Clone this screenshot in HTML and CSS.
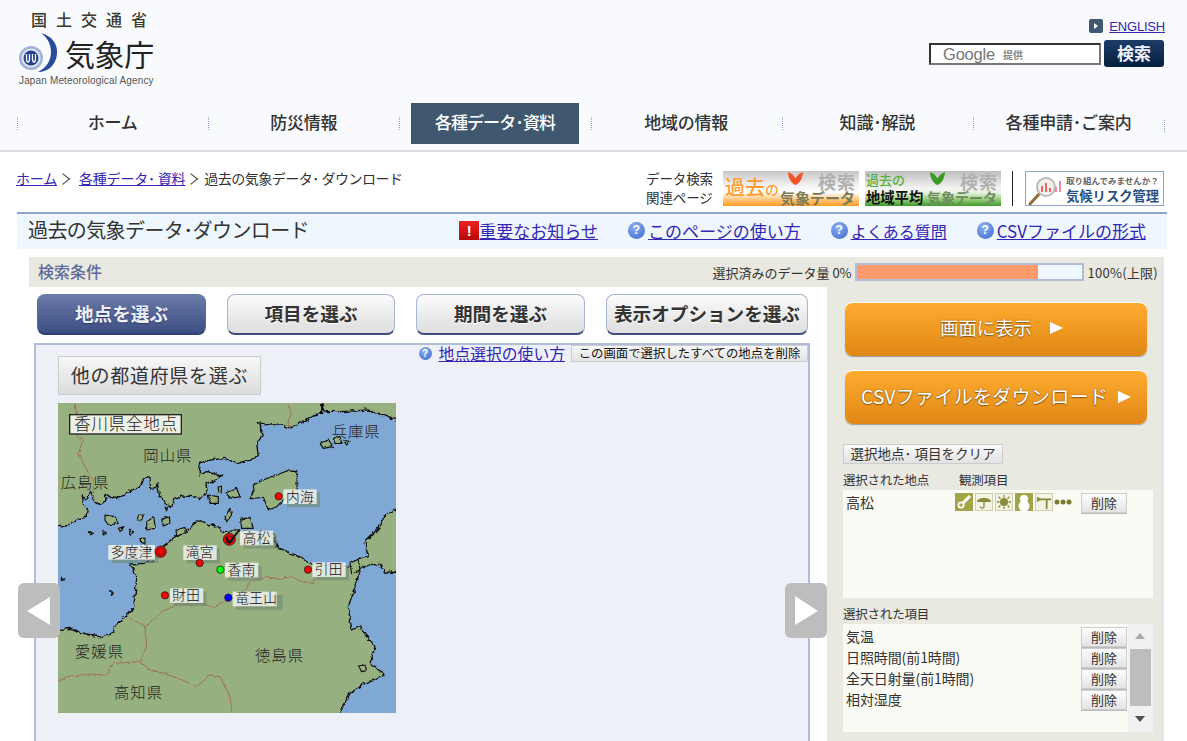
FILE: index.html
```html
<!DOCTYPE html>
<html lang="ja">
<head>
<meta charset="utf-8">
<title>過去の気象データ・ダウンロード</title>
<link rel="stylesheet" href="styles.css">
</head>
<body>
<header class="site-head">
  <div class="head-top">
    <div class="logo">
      <div class="ministry">国土交通省</div>
      <div class="logo-main">
        <svg class="logo-mark" viewBox="0 0 40 40" width="40" height="40" aria-hidden="true">
          <path d="M22 0C33 3 39 11 38 21C37 32 29 39 19 39C27 35 32 28 32 19C32 11 28 4 22 0Z" fill="#2c4a9c"/>
          <circle cx="12" cy="25" r="12" fill="#9fb2d8"/>
          <circle cx="12" cy="25" r="9.5" fill="#dfe6f3"/>
          <circle cx="12" cy="25" r="7.5" fill="#24408e"/>
          <path d="M7.5 21v5c0 4 3 4 3 0v-5M13.500 21v5c0 4 3 4 3 0v-5" fill="none" stroke="#fff" stroke-width="1.300"/>
        </svg>
        <span class="agency">気象庁</span>
      </div>
      <div class="agency-en">Japan Meteorological Agency</div>
    </div>
    <div class="head-tools">
      <div class="english"><span class="en-icon"></span><a href="#">ENGLISH</a></div>
      <div class="search">
        <div class="search-box"><span class="g">Google</span><span class="g-sub">提供</span></div>
        <div class="search-btn">検索</div>
      </div>
    </div>
  </div>
  <nav>
    <ul class="nav-list">
      <li class="nav-item"><a href="#">ホーム</a></li>
      <li class="nav-item"><a href="#">防災情報</a></li>
      <li class="nav-item active"><a href="#">各種データ･資料</a></li>
      <li class="nav-item"><a href="#">地域の情報</a></li>
      <li class="nav-item"><a href="#">知識･解説</a></li>
      <li class="nav-item"><a href="#">各種申請･ご案内</a></li>
    </ul>
  </nav>
</header>

<div class="sub-row">
  <div class="crumbs"><a href="#">ホーム</a><span class="chev"></span><a href="#">各種データ･ 資料</a><span class="chev"></span><span class="cur">過去の気象データ･ ダウンロード</span></div>
  <div class="related">
    <div class="related-label">データ検索<br>関連ページ</div>
    <div class="banner b-orange">
      <span class="b-past">過去<small>の</small></span>
      <span class="b-data">気象データ</span>
      <svg class="b-v" viewBox="0 0 16 14" width="17" height="13" aria-hidden="true"><path d="M0 0C3 1 6 3 8 7C10 3 13 1 16 0C16 6 13 12 8 14C3 12 0 6 0 0Z" fill="#f0562a"/></svg>
      <span class="b-search">検索</span>
    </div>
    <div class="banner b-green">
      <span class="b2-past">過去の</span>
      <span class="b2-area">地域平均</span>
      <span class="b2-data">気象データ</span>
      <svg class="b-v" viewBox="0 0 16 14" width="17" height="13" aria-hidden="true"><path d="M0 0C3 1 6 3 8 7C10 3 13 1 16 0C16 6 13 12 8 14C3 12 0 6 0 0Z" fill="#3e9a24"/></svg>
      <span class="b-search">検索</span>
    </div>
    <div class="divider"></div>
    <div class="banner b-risk">
      <svg class="risk-icon" viewBox="0 0 36 32" width="36" height="32" aria-hidden="true">
        <path d="M2 31L12 20" stroke="#9a6a3a" stroke-width="3" stroke-linecap="round"/>
        <circle cx="18" cy="14" r="9" fill="#f4f0ea" stroke="#bbb" stroke-width="2"/>
        <path d="M14 19v-6M18 19v-9M22 19v-4" stroke="#e66" stroke-width="2"/>
        <path d="M28 14v5M32 8v11" stroke="#e8a" stroke-width="2"/>
      </svg>
      <div class="risk-text"><span class="risk-small">取り組んでみませんか？</span><span class="risk-big">気候リスク管理</span></div>
    </div>
  </div>
</div>

<div class="title-bar">
  <h1 class="page-title">過去の気象データ･ダウンロード</h1>
  <div class="title-links">
    <div class="t-link"><span class="alert">!</span><a href="#" class="l17">重要なお知らせ</a></div>
    <div class="t-link"><span class="q">?</span><a href="#" class="l17 ml">このページの使い方</a></div>
    <div class="t-link"><span class="q">?</span><a href="#" class="l16 ml">よくある質問</a></div>
    <div class="t-link"><span class="q">?</span><a href="#" class="l17 ml">CSVファイルの形式</a></div>
  </div>
</div>

<main class="panel">
  <div class="panel-head">
    <div class="panel-title">検索条件</div>
    <div class="quota">
      <span>選択済みのデータ量 0%</span>
      <div class="bar"><div class="bar-fill"></div></div>
      <span class="limit">100%(上限)</span>
    </div>
  </div>
  <div class="panel-body">
    <section class="left">
      <div class="tabs">
        <div class="tab on w169">地点を選ぶ</div>
        <div class="tab w168">項目を選ぶ</div>
        <div class="tab w169">期間を選ぶ</div>
        <div class="tab w202">表示オプションを選ぶ</div>
      </div>
      <div class="map-panel">
        <div class="map-tools">
          <span class="q q-s">?</span><a href="#" class="howto">地点選択の使い方</a>
          <div class="del-all">この画面で選択したすべての地点を削除</div>
        </div>
        <div class="pref-btn">他の都道府県を選ぶ</div>
        <svg class="map" viewBox="24 9 1014 930" width="338" height="310" role="img" aria-label="香川県全地点の地図">
          <defs>
            <filter id="rough" filterUnits="userSpaceOnUse" x="-60" y="-60" width="1200" height="1100">
              <feTurbulence type="fractalNoise" baseFrequency="0.07" numOctaves="2" seed="4"/>
              <feDisplacementMap in="SourceGraphic" scale="16" xChannelSelector="R" yChannelSelector="G"/>
            </filter>
            <filter id="rough-s" filterUnits="userSpaceOnUse" x="-60" y="-60" width="1200" height="1100">
              <feTurbulence type="fractalNoise" baseFrequency="0.09" numOctaves="2" seed="9"/>
              <feDisplacementMap in="SourceGraphic" scale="9" xChannelSelector="R" yChannelSelector="G"/>
            </filter>
          </defs>
          <rect x="24" y="9" width="1014" height="930" fill="#96b080"/>
          <g fill="#80a8d4" stroke="#111" stroke-width="4" stroke-linejoin="round" filter="url(#rough)">
            <path d="M-30 372L50 378L62 372L80 358L108 352L112 325L100 312L97 285L108 300L122 275L130 300L150 315L168 300L165 280L182 292L205 296L225 282L245 270L268 262L280 240L292 230L300 232L302 268L316 262L322 248L328 285L345 310L365 322L372 295L395 288L430 290L450 296L472 280L468 250L495 240L515 228L470 215L452 222L445 190L480 180L525 175L560 190L595 182L625 170L620 130L640 105L625 68L660 75L695 75L720 85L755 68L790 45L815 40L815 12L822 35L875 35L955 30L1025 55L1090 80L1090 305L1005 345L985 385L945 425L955 470L925 478L895 500L860 495L800 495L775 490L755 472L725 462L680 440L672 402L640 395L600 395L560 392L520 395L490 372L470 375L452 362L430 370L405 398L375 410L348 432L330 445L312 482L280 490L240 492L260 530L255 590L250 625L225 650L195 680L190 695L160 712L120 705L85 695L60 685L-30 695Z"/>
            <path d="M1090 520L1005 516L985 490L955 495L930 505L915 560L895 620L905 690L930 680L975 740L960 790L1005 825L945 850L900 880L840 990L1090 990Z"/>
          </g>
          <g fill="#96b080" stroke="#111" stroke-width="3.500" stroke-linejoin="round" filter="url(#rough-s)">
            <path d="M610 255L640 240L680 225L712 212L740 215L742 280L715 285L700 300L680 320L655 330L640 292L600 296L612 272Z"/>
            <path d="M165 345L195 350L205 370L175 375L165 360Z"/>
            <path d="M265 345L280 345L275 360L262 360Z"/>
            <path d="M290 365L312 350L315 385L290 390Z"/>
            <path d="M335 358L358 350L360 370L340 378Z"/>
            <path d="M205 385L222 380L210 395Z"/>
            <path d="M115 395L130 400L120 405Z"/>
            <path d="M158 392L168 400L160 405Z"/>
            <path d="M238 388L250 395L240 408Z"/>
            <path d="M270 415L285 415L285 430L272 428Z"/>
            <path d="M378 390L405 382L405 400L380 408Z"/>
            <path d="M525 350L540 325L545 345L530 365Z"/>
            <path d="M525 280L560 265L570 290L545 295Z"/>
            <path d="M475 285L505 290L505 310L480 310Z"/>
            <path d="M505 262L515 258L513 280L505 280Z"/>
            <path d="M810 130L835 120L850 140L820 145Z"/>
            <path d="M850 115L870 110L875 130L855 130Z"/>
            <path d="M880 120L900 125L890 135Z"/>
            <path d="M572 358L600 352L610 385L575 385Z"/>
            <path d="M900 490L925 478L930 510L905 520Z"/>
            <path d="M182 572L190 578L184 584Z"/>
            <path d="M34 532L46 538L38 542Z"/>
            <path d="M345 322L352 322L350 332Z"/>
            <path d="M925 798L945 795L950 812L935 815Z"/>
          </g>
          <g fill="none" stroke="#a0705c" stroke-width="3" filter="url(#rough-s)">
            <path d="M75 9L85 75L82 110L100 120L85 160L110 210L130 240L130 300"/>
            <path d="M712 9L725 40L715 60L720 85"/>
            <path d="M795 530L790 550L760 545L720 530L690 538L650 530L620 540L600 545L590 570L560 590L530 600L510 610L490 625L460 610L430 612L380 610L370 620L335 635L320 650L285 680L240 655"/>
            <path d="M285 680L290 740L270 785L300 810L350 822L420 850L440 860L480 825L510 830L540 890L545 938"/>
            <path d="M270 785L190 790L170 825L125 822L90 825L50 830L24 845"/>
          </g>
          <g class="pref-names">
            <text x="845" y="112">兵庫県</text>
            <text x="280" y="183">岡山県</text>
            <text x="32" y="265">広島県</text>
            <text x="75" y="772">愛媛県</text>
            <text x="615" y="783">徳島県</text>
            <text x="192" y="895">高知県</text>
          </g>
          <rect x="59" y="44" width="335" height="58" fill="#eef0e4" stroke="#222" stroke-width="4"/>
          <text class="map-title" x="72" y="91">香川県全地点</text>
          <g class="shadow">
            <rect x="710" y="278" width="100" height="44"/>
            <rect x="580" y="402" width="100" height="44"/>
            <rect x="185" y="445" width="140" height="44"/>
            <rect x="410" y="446" width="100" height="44"/>
            <rect x="535" y="498" width="100" height="44"/>
            <rect x="797" y="497" width="100" height="44"/>
            <rect x="370" y="575" width="100" height="44"/>
            <rect x="558" y="585" width="140" height="44"/>
          </g>
          <g class="tags">
            <rect x="700" y="268" width="100" height="44"/>
            <rect x="570" y="392" width="100" height="44"/>
            <rect x="175" y="435" width="140" height="44"/>
            <rect x="400" y="436" width="100" height="44"/>
            <rect x="525" y="488" width="100" height="44"/>
            <rect x="787" y="487" width="100" height="44"/>
            <rect x="360" y="565" width="100" height="44"/>
            <rect x="548" y="575" width="132" height="44"/>
          </g>
          <g class="tag-text">
            <text x="708" y="305">内海</text>
            <text x="578" y="429">高松</text>
            <text x="182" y="472">多度津</text>
            <text x="407" y="472">滝宮</text>
            <text x="533" y="524">香南</text>
            <text x="794" y="523">引田</text>
            <text x="367" y="601">財田</text>
            <text x="556" y="609">竜王山</text>
          </g>
          <g stroke="#222" stroke-width="2.500">
            <circle cx="686" cy="289" r="11" fill="#f00"/>
            <circle cx="449" cy="489" r="11" fill="#f00"/>
            <circle cx="511" cy="509" r="11" fill="#0f0"/>
            <circle cx="774" cy="509" r="11" fill="#f00"/>
            <circle cx="345" cy="586" r="11" fill="#f00"/>
            <circle cx="535" cy="593" r="11" fill="#00f"/>
            <circle cx="332" cy="455" r="17" fill="#f00"/>
            <circle cx="332" cy="455" r="10" fill="#f00"/>
            <circle cx="538" cy="418" r="18" fill="#f00"/>
            <circle cx="538" cy="418" r="11" fill="#f00"/>
          </g>
          <path d="M528 412L538 428L568 390" fill="none" stroke="#111" stroke-width="6"/>
        </svg>
        <div class="arrow prev"><svg viewBox="0 0 42 55" width="42" height="55" aria-hidden="true"><path d="M32 14V42L9 28Z" fill="#fff"/></svg></div>
        <div class="arrow next"><svg viewBox="0 0 42 55" width="42" height="55" aria-hidden="true"><path d="M10 13V42L33 28Z" fill="#fff"/></svg></div>
      </div>
    </section>
    <aside class="side">
      <div class="cta"><span class="cta-in">画面に表示<span class="tri tri-a"></span></span></div>
      <div class="cta cta-2">CSVファイルをダウンロード<span class="tri"></span></div>
      <div class="clear-btn">選択地点･ 項目をクリア</div>
      <div class="col-labels"><span class="c1">選択された地点</span><span>観測項目</span></div>
      <div class="box box-st">
        <div class="st-row">
          <span class="st-name">高松</span>
          <div class="ob-icons">
            <svg class="ob" viewBox="0 0 18 18" aria-hidden="true"><rect width="18" height="18" fill="#a3a347"/><path d="M15 3L8 10" stroke="#fff" stroke-width="3"/><circle cx="6" cy="12" r="3.500" fill="#fff"/><circle cx="6" cy="12" r="1.800" fill="#a3a347"/></svg>
            <svg class="ob lt" viewBox="0 0 18 18" aria-hidden="true"><path d="M1 9C2 3 16 3 17 9Z" fill="#8a8a3c"/><path d="M9 8V14C9 17 5 16 5 14" fill="none" stroke="#8a8a3c" stroke-width="1.500"/></svg>
            <svg class="ob lt" viewBox="0 0 18 18" aria-hidden="true"><circle cx="9" cy="9" r="4.500" fill="#8a8a3c"/><path d="M9 1V4M9 14V17M1 9H4M14 9H17M3 3L5 5M13 13L15 15M3 15L5 13M13 5L15 3" stroke="#8a8a3c" stroke-width="1.500"/></svg>
            <svg class="ob" viewBox="0 0 18 18" aria-hidden="true"><rect width="18" height="18" fill="#a3a347"/><circle cx="9" cy="6" r="4" fill="#fff"/><circle cx="9" cy="13" r="5.500" fill="#fff"/></svg>
            <svg class="ob lt" viewBox="0 0 18 18" aria-hidden="true"><path d="M1 3L7 6L1 9Z" fill="#8a8a3c"/><path d="M5 6H17M12 6V17" stroke="#8a8a3c" stroke-width="2"/></svg>
            <svg class="ob-more" viewBox="0 0 18 18" aria-hidden="true"><circle cx="3" cy="9" r="2.500" fill="#7a7a30"/><circle cx="9" cy="9" r="2.500" fill="#7a7a30"/><circle cx="15" cy="9" r="2.500" fill="#7a7a30"/></svg>
          </div>
          <div class="del">削除</div>
        </div>
      </div>
      <div class="col-labels lbl-2">選択された項目</div>
      <div class="box box-items">
        <div class="rows">
          <div class="item"><span>気温</span><div class="del">削除</div></div>
          <div class="item"><span>日照時間(前1時間)</span><div class="del">削除</div></div>
          <div class="item"><span>全天日射量(前1時間)</span><div class="del">削除</div></div>
          <div class="item"><span>相対湿度</span><div class="del">削除</div></div>
        </div>
        <div class="scroll">
          <span class="sc-up"></span>
          <span class="sc-thumb"></span>
          <span class="sc-down"></span>
        </div>
      </div>
    </aside>
  </div>
</main>
</body>
</html>
```

FILE: styles.css
```css
* { box-sizing: border-box; }
html, body { margin: 0; padding: 0; }
body {
  width: 1187px;
  height: 741px;
  overflow: hidden;
  display: flex;
  flex-direction: column;
  background: #fff;
  color: #333;
  font-family: "Noto Sans CJK JP", "Liberation Sans", sans-serif;
}
a { color: #3526b4; }

/* header */
.site-head {
  height: 152px;
  flex: none;
  background: #f8fafd;
  border-bottom: 2px solid #ddd;
}
.head-top { height: 103px; display: flex; justify-content: space-between; }
.logo { padding: 10px 0 0 19px; width: 200px; }
.ministry {
  margin-left: 12px;
  font-size: 16px;
  line-height: 18px;
  font-weight: 500;
  letter-spacing: 9px;
  color: #3a3a30;
  white-space: nowrap;
}
.logo-main { display: flex; align-items: flex-end; height: 43px; margin-top: 1px; }
.logo-mark { display: block; flex: none; margin-right: 6px; margin-bottom: -1px; }
.agency { font-size: 30px; line-height: 38px; color: #222; letter-spacing: -.4px; white-space: nowrap; }
.agency-en {
  margin-top: 3px;
  font-family: "Liberation Sans", sans-serif;
  font-size: 10px;
  line-height: 11px;
  letter-spacing: .15px;
  color: #555;
  white-space: nowrap;
}
.head-tools { width: 260px; padding: 19px 22px 0 0; display: flex; flex-direction: column; align-items: flex-end; }
.english { display: flex; align-items: center; height: 14px; }
.en-icon {
  width: 14px;
  height: 14px;
  margin-right: 6px;
  border-radius: 2px;
  background: #3f5870;
  position: relative;
}
.en-icon::after {
  content: "";
  position: absolute;
  left: 5px;
  top: 4px;
  border-left: 4px solid #fff;
  border-top: 3px solid transparent;
  border-bottom: 3px solid transparent;
}
.english a { font-size: 13px; letter-spacing: -.2px; font-family: "Liberation Sans", sans-serif; }
.search { display: flex; margin-top: 7px; align-items: flex-start; margin-right: 1px; }
.search-box {
  width: 172px;
  height: 22px;
  margin-top: 3px;
  border: 2px solid;
  border-color: #333 #777 #777 #333;
  background: #fff;
  padding-left: 12px;
  display: flex;
  align-items: center;
  font-family: "Liberation Sans", sans-serif;
  color: #777;
}
.g { font-size: 16.500px; letter-spacing: -.2px; }
.g-sub { font-family: "Noto Sans CJK JP", sans-serif; font-size: 10px; font-weight: 700; margin-left: 8px; color: #888; }
.search-btn {
  width: 60px;
  height: 27px;
  margin-left: 3px;
  border-radius: 3px;
  background: linear-gradient(#1c3c68, #04203f);
  color: #eef;
  font-size: 17px;
  font-weight: 700;
  line-height: 25px;
  text-align: center;
}
.nav-list { list-style: none; margin: 0; padding: 0 0 0 17px; display: flex; height: 41px; }
.nav-item { flex: 0 0 191.200px; position: relative; display: flex; }
.nav-item::before {
  content: "";
  position: absolute;
  left: 0;
  top: 14px;
  height: 13px;
  border-left: 1px dotted #8ea3c8;
}
.nav-item:last-child::after {
  content: "";
  position: absolute;
  right: -1px;
  top: 17px;
  height: 13px;
  border-left: 1px dotted #8ea3c8;
}
.nav-item a {
  flex: 1;
  color: #333;
  text-decoration: none;
  text-align: center;
  font-size: 17px;
  font-weight: 500;
  line-height: 38px;
  white-space: nowrap;
  letter-spacing: -.2px;
}
.nav-item.active a { margin: 0 11.600px; background: #3f5870; color: #fff; letter-spacing: -.9px; }

/* sub row */
.sub-row {
  flex: none;
  height: 60px;
  padding: 19px 23px 0 16px;
  display: flex;
  justify-content: space-between;
}
.crumbs { font-size: 14px; line-height: 14px; white-space: nowrap; letter-spacing: -.2px; }
.chev {
  display: inline-block;
  width: 8px;
  height: 8px;
  margin: 0 12px 1px 2px;
  border-top: 1px solid #555;
  border-right: 1px solid #555;
  transform: scaleX(1.300) rotate(45deg);
}
.cur { letter-spacing: -.5px; margin-left: -3px; }
.related { display: flex; }
.related-label { width: 77px; font-size: 13.500px; line-height: 19px; margin-top: -2px; white-space: nowrap; letter-spacing: -.1px; }
.banner { position: relative; width: 136px; height: 35px; overflow: hidden; white-space: nowrap; }
.b-orange { background: linear-gradient(#c6c6c6 0, #f6f6f6 45%, #fff 62%, #ffcf90 78%, #ff9a1e 100%); margin-right: 6px; }
.b-green { background: linear-gradient(#bdbdbd 0, #f4f4f4 50%, #e8f2e0 62%, #9ccf7e 80%, #3d9a2c 100%); }
.b-past {
  position: absolute; left: 2px; top: 5px;
  font-size: 20px; line-height: 22px; font-weight: 500; color: #ff9e30;
}
.b-past small { font-size: 14px; }
.b-data {
  position: absolute; left: 57px; top: 18px;
  font-size: 15px; line-height: 17px; font-weight: 700; color: #7c7c58;
}
.b-v { position: absolute; left: 64px; top: 1px; }
.b-search {
  position: absolute; right: 3px; top: 2px;
  font-size: 18px; line-height: 16px; font-weight: 700; color: #b0b0b0;
  letter-spacing: 1px;
}
.b2-past { position: absolute; left: 1px; top: 2px; font-size: 13px; line-height: 14px; font-weight: 500; color: #5caf3c; }
.b2-area { position: absolute; left: 1px; top: 18px; font-size: 14.300px; line-height: 16px; font-weight: 700; color: #111; }
.b2-data { position: absolute; left: 62px; top: 18px; font-size: 14px; line-height: 17px; font-weight: 700; color: #6e8a5c; }
.divider { width: 1px; height: 35px; background: #222; margin: 0 12px 0 11px; }
.b-risk {
  width: 139px;
  border: 1px solid #8ea3c8;
  background: #fff;
  display: flex;
  align-items: center;
  padding-left: 2px;
}
.risk-icon { flex: none; margin-right: 2px; }
.risk-text { display: flex; flex-direction: column; }
.risk-small { font-size: 8.500px; line-height: 13px; font-weight: 700; color: #666; }
.risk-big { font-size: 13.300px; line-height: 17px; font-weight: 700; color: #2a5080; }

/* title */
.title-bar {
  flex: none;
  margin-left: 17px;
  width: 1150px;
  height: 37px;
  border-top: 2px solid #8ea3c8;
  background: #eef6fe;
  display: flex;
  align-items: center;
  justify-content: space-between;
  padding: 0 21px 0 11px;
}
.page-title { margin: -4px 0 0; font-size: 20px; line-height: 28px; font-weight: 400; letter-spacing: -.6px; color: #333; white-space: nowrap; }
.title-links { display: flex; gap: 30px; margin-top: -2px; }
.t-link { display: flex; align-items: center; white-space: nowrap; }
.l17 { font-size: 17px; line-height: 22px; }
.l16 { font-size: 16px; line-height: 22px; }
.ml { margin-left: 3px; }
.alert {
  width: 20px;
  height: 19px;
  display: block;
  background: linear-gradient(#ee2222, #b80808);
  color: #fff;
  font: 700 15px/19px "Liberation Sans", sans-serif;
  text-align: center;
}
.q {
  width: 17px;
  height: 17px;
  border-radius: 50%;
  background: radial-gradient(circle at 40% 30%, #8fb0f0, #3a66cc);
  color: #fff;
  font: 700 12px/17px "Liberation Sans", sans-serif;
  text-align: center;
  display: block;
  flex: none;
}
.q-s { width: 13px; height: 13px; font-size: 10px; line-height: 13px; }

/* panel */
.panel {
  flex: 1;
  min-height: 0;
  margin: 8px 0 0 29px;
  width: 1135px;
  display: flex;
  flex-direction: column;
}
.panel-head {
  flex: none;
  height: 30px;
  background: #e9e9e2;
  padding: 0 6px 0 9px;
  display: flex;
  justify-content: space-between;
  align-items: center;
}
.panel-title { font-size: 16px; font-weight: 500; color: #5f6b9a; line-height: 28px; margin-top: -2px; }
.quota { display: flex; align-items: center; font-size: 13px; white-space: nowrap; }
.limit { letter-spacing: .25px; }
.bar {
  width: 229px;
  height: 18px;
  margin: 0 4px 0 3px;
  border: 2px solid #b0bcd8;
  background: #eef6fe;
}
.bar-fill { width: 181px; height: 100%; background: #ff9a6a; }
.panel-body { flex: 1; min-height: 0; display: flex; }
.left { width: 798px; flex: none; background: #fff; padding-top: 7px; display: flex; flex-direction: column; }
.tabs { display: flex; gap: 21px; padding-left: 8px; flex: none; }
.tab {
  height: 41px;
  border: 1px solid #a8b6d4;
  border-bottom: 2px solid #3c4c7e;
  border-radius: 8px;
  background: linear-gradient(#fbfbfb, #dedede);
  font-size: 18.600px;
  font-weight: 700;
  line-height: 35px;
  text-align: center;
  color: #333;
  white-space: nowrap;
  text-shadow: 0 1px 0 #fff;
  overflow: hidden;
}
.tab.on {
  background: linear-gradient(#6a7aa8, #3d4e84);
  border-color: #6a7aa8 #5a6a9c #2f3f70;
  color: #eef0f8;
  text-shadow: 0 1px 1px #2b3a66;
}
.w169 { width: 169px; }
.w168 { width: 168px; }
.w202 { width: 202px; }
.map-panel {
  flex: 1;
  min-height: 0;
  margin: 8px 0 0 5px;
  width: 776px;
  border: 2px solid #b0bcdc;
  border-bottom: 0;
  background: #eef0f7;
  position: relative;
}
.map-tools {
  display: flex;
  justify-content: flex-end;
  align-items: center;
  height: 17px;
}
.howto { font-size: 15.800px; line-height: 18px; margin: 0 6px 0 7px; white-space: nowrap; }
.del-all {
  width: 237px;
  height: 17px;
  border: 1px solid #ccc;
  background: linear-gradient(#f8f8f8, #e2e2e2);
  font-size: 12.400px;
  line-height: 15px;
  color: #111;
  text-align: center;
  white-space: nowrap;
}
.pref-btn {
  width: 203px;
  height: 39px;
  margin: -6px 0 0 22px;
  border: 1px solid #ccc;
  background: linear-gradient(#f7f7f7, #dcdcdc);
  font-size: 19px;
  line-height: 36px;
  color: #333;
  text-align: center;
  white-space: nowrap;
  letter-spacing: .7px;
}
.map { display: block; margin: 8px 0 0 22px; }
.pref-names text { font-size: 46px; fill: #222; letter-spacing: 3px; font-weight: 300; }
.map-title { font-size: 50px; fill: #222; letter-spacing: 2px; font-weight: 300; }
.shadow rect { fill: #6f8a70; opacity: .6; }
.tags rect { fill: #eef0ea; opacity: .88; }
.tag-text text { font-size: 41px; fill: #111; letter-spacing: 1px; font-weight: 300; }
.arrow {
  position: absolute;
  top: 238px;
  width: 42px;
  height: 55px;
  border-radius: 6px;
  background: #bdbdbd;
}
.arrow svg { display: block; }
.prev { left: -18px; }
.next { left: 749px; }

/* side */
.side {
  flex: 1;
  background: #e9e9e2;
  padding: 15px 11px 0 16px;
  display: flex;
  flex-direction: column;
  font-size: 13px;
}
.cta {
  width: 302px;
  height: 54px;
  margin-left: 2px;
  flex: none;
  border-radius: 8px;
  border-top: 1px solid #fff;
  background: linear-gradient(#ffab30, #df8815);
  box-shadow: 0 1px 1px #999;
  color: #fff;
  font-size: 18.400px;
  font-weight: 400;
  line-height: 49px;
  text-align: center;
  white-space: nowrap;
  text-shadow: 0 0 2px #8a5a10, 0 1px 1px #8a5a10;
}
.cta-in { margin-left: 11px; }
.cta-2 { margin-top: 14px; font-size: 19px; letter-spacing: .3px; }
.tri {
  display: inline-block;
  margin-left: 10px;
  vertical-align: 1px;
  border-left: 13px solid #fff;
  border-top: 6px solid transparent;
  border-bottom: 6px solid transparent;
}
.tri-a { margin-left: 18px; }
.clear-btn {
  width: 160px;
  height: 20px;
  margin-top: 20px;
  flex: none;
  border: 1px solid #ccc;
  background: linear-gradient(#fafafa, #e2e2e2);
  font-size: 13.500px;
  line-height: 17px;
  text-align: center;
  color: #333;
  white-space: nowrap;
}
.col-labels { height: 26px; padding-top: 8px; line-height: 16px; font-size: 12.500px; white-space: nowrap; flex: none; display: flex; letter-spacing: -.2px; }
.c1 { width: 116px; }
.lbl-2 { height: 26px; }
.box { width: 310px; height: 108px; background: #fafbf5; flex: none; font-size: 14px; }
.box-st { padding: 3px 0 0 3px; }
.st-row { display: flex; align-items: flex-start; }
.st-name { width: 109px; line-height: 18px; }
.ob-icons { width: 126px; display: flex; gap: 2px; align-items: center; }
.ob { width: 18px; height: 18px; display: block; flex: none; background: #f4f4e4; }
.ob.lt { border: 1px solid #cccfa8; }
.ob-more { width: 18px; height: 18px; display: block; flex: none; margin-left: -1px; }
.del {
  width: 46px;
  height: 20px;
  border: 1px solid #ccc;
  background: linear-gradient(#fdfdfd, #e4e4e4);
  font-size: 13px;
  line-height: 17px;
  color: #333;
  text-align: center;
  flex: none;
  box-shadow: 0 1px 0 #bbb;
}
.box-items { display: flex; }
.rows { flex: 1; padding: 3px 1px 0 3px; }
.item { display: flex; justify-content: space-between; align-items: flex-start; height: 21px; white-space: nowrap; line-height: 18px; letter-spacing: -.1px; }
.scroll { width: 25px; background: #f1f1f1; position: relative; flex: none; }
.sc-up, .sc-down {
  position: absolute;
  left: 7px;
  border-left: 5.500px solid transparent;
  border-right: 5.500px solid transparent;
}
.sc-up { top: 9px; border-bottom: 6px solid #aaa; }
.sc-down { bottom: 10px; border-top: 6px solid #505050; }
.sc-thumb { position: absolute; left: 2px; top: 25px; width: 21px; height: 57px; background: #bdbdbd; }
```
